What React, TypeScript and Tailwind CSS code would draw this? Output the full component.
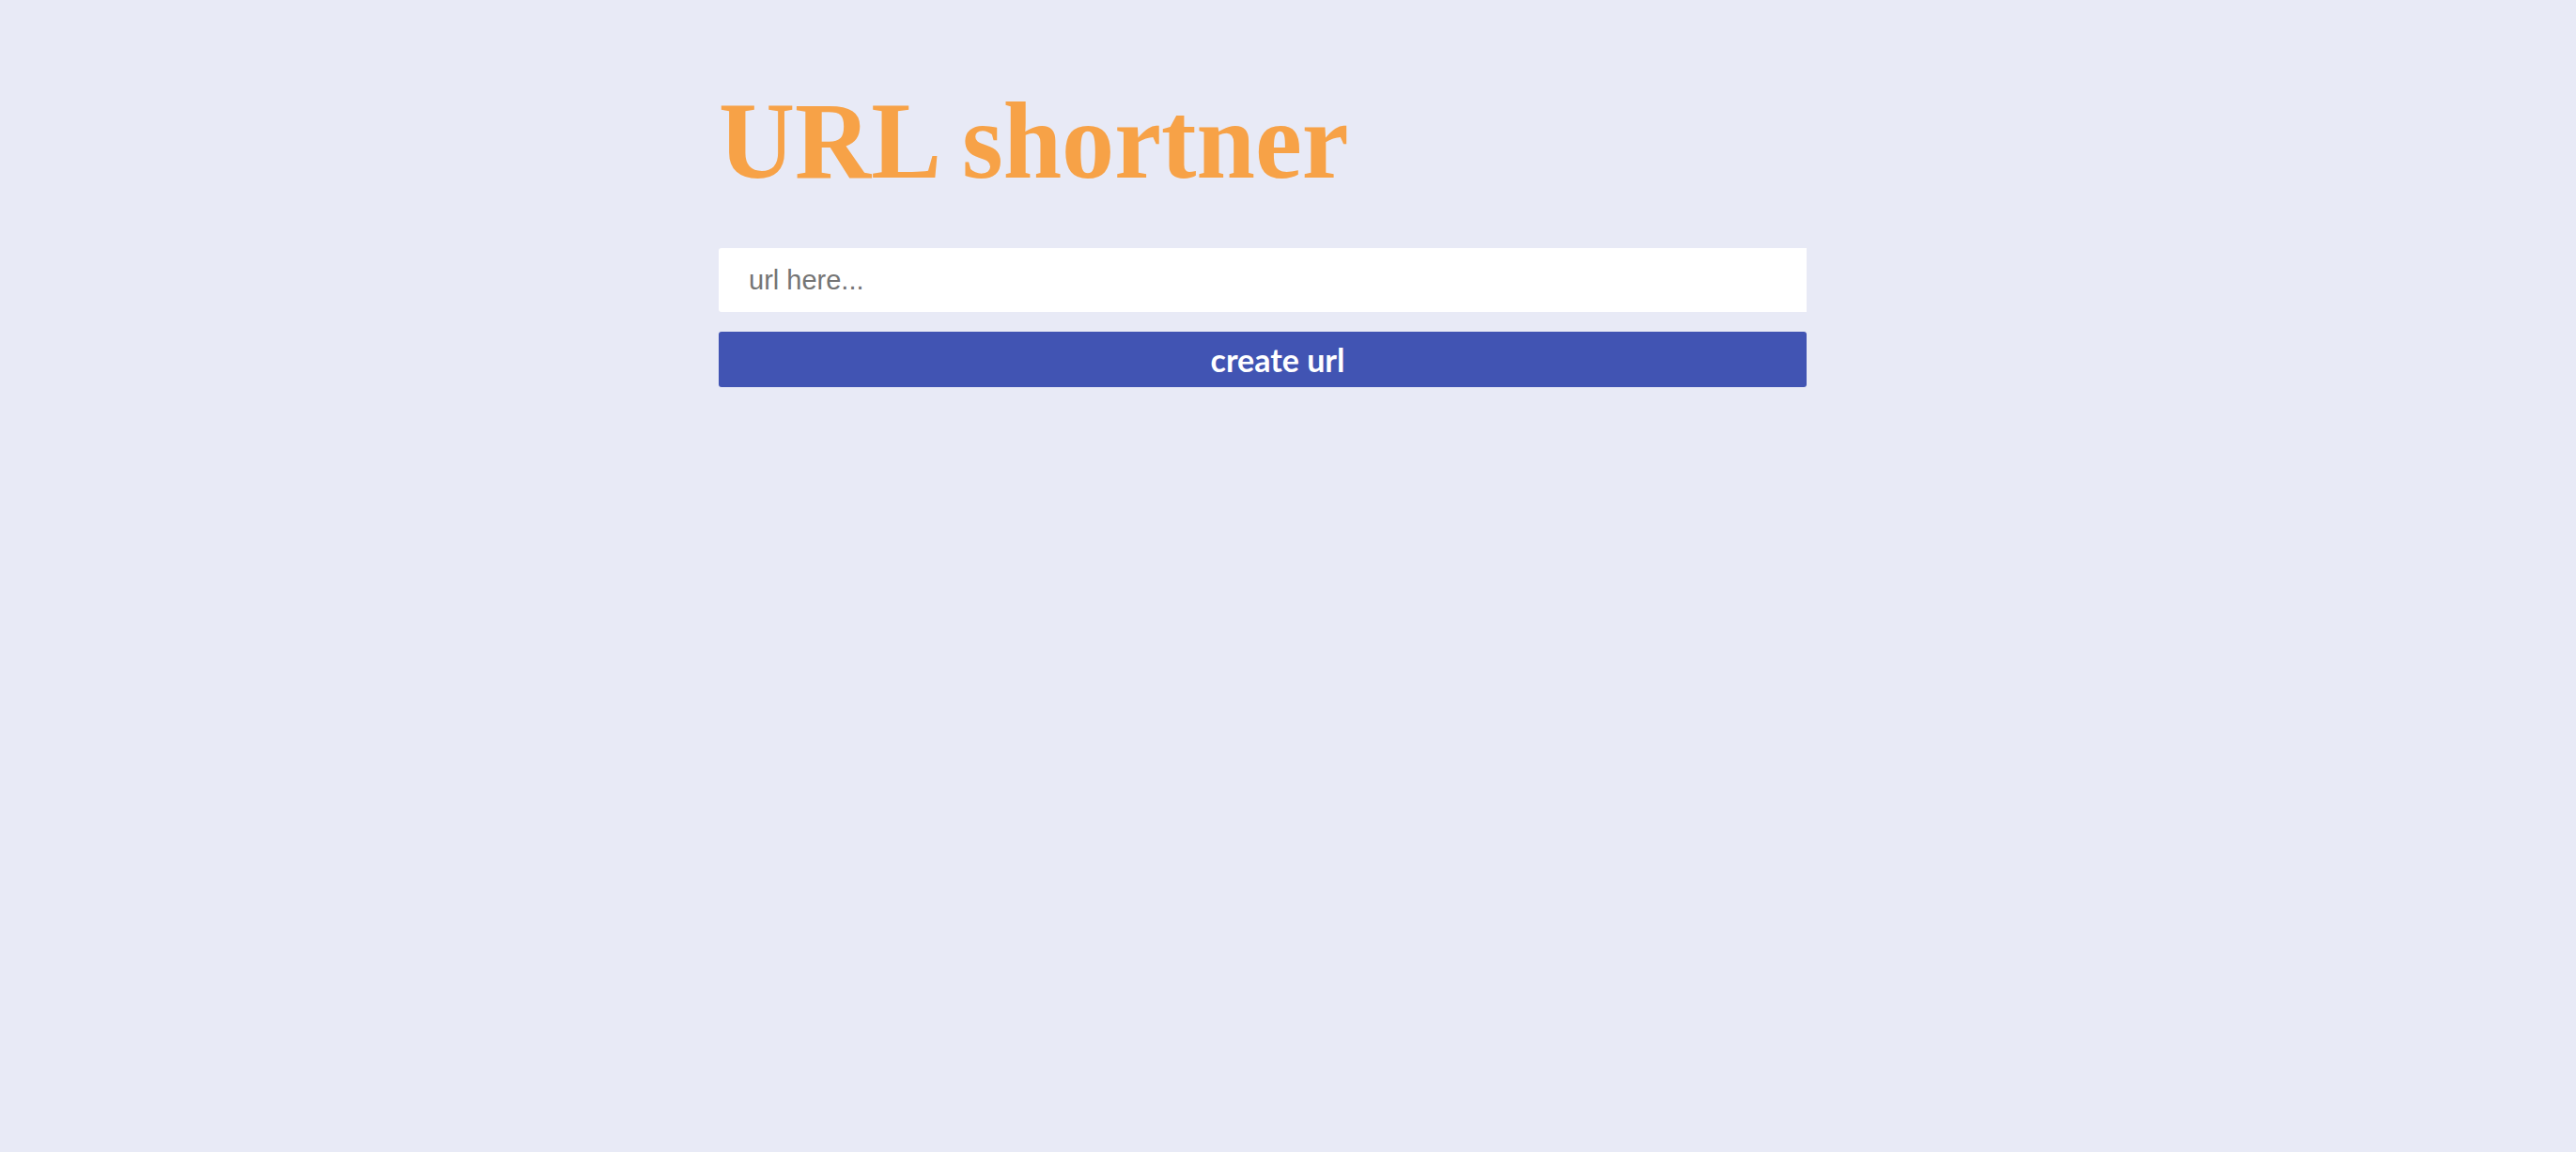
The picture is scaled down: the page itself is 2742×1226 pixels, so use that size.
import * as React from "react"

const App = () => {
  return (
    <div className="min-h-screen w-full bg-[#e8eaf6]">
      <div className="pl-[765px] pt-[92px]">
        <div className="w-[1158px] flex flex-col">
          <h1 className="h-[116px] origin-left scale-x-[0.968] whitespace-nowrap font-['Liberation_Serif',serif] text-[116px] font-bold leading-none text-[#f7a247]">
            URL shortner
          </h1>
          <input
            type="text"
            placeholder="url here..."
            className="mt-[56px] h-[68px] w-full rounded-l-[3px] bg-white pl-[32px] font-['Liberation_Sans',Arial,sans-serif] text-[29px] text-[#333] outline-none placeholder:text-[#757575]"
          />
          <button className="mt-[21px] h-[59px] w-full rounded-[3px] bg-[#4154b3] pl-[32px] font-['Lato',sans-serif] text-[34px] font-bold text-white">
            create url
          </button>
        </div>
      </div>
    </div>
  )
}

export default App
